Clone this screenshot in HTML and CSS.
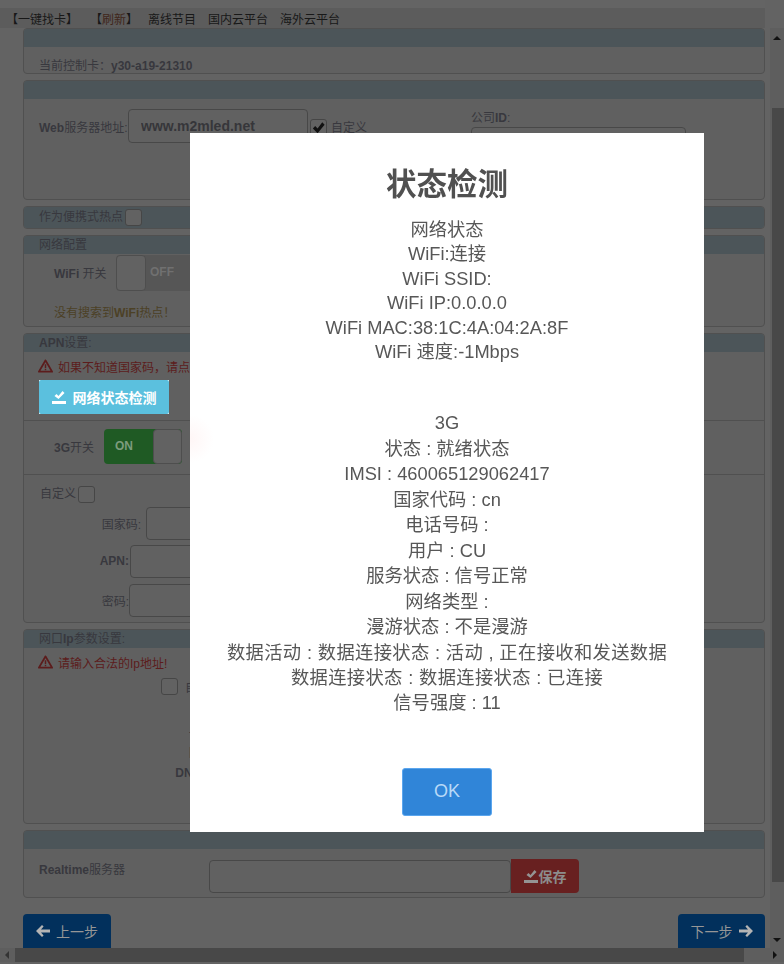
FILE: index.html
```html
<!DOCTYPE html>
<html lang="zh-CN">
<head>
    <meta charset="UTF-8">
    <title>状态检测</title>
    <link rel="stylesheet" href="styles.css">
</head>
<body>

    <div class="main">
        <div class="content">
            <div class="toolbar">
                <a class="tool-find">【一键找卡】</a>
                <a class="tool-refresh">【<em>刷新</em>】</a>
                <a class="tool-link">离线节目</a>
                <a class="tool-link">国内云平台</a>
                <a class="tool-link">海外云平台</a>
            </div>

            <div class="panel panel-card">
                <div class="panel-head"></div>
                <div class="card-name">当前控制卡：<b>y30-a19-21310</b></div>
            </div>

            <div class="panel panel-server">
                <div class="panel-head"></div>
                <div class="server-body">
                    <div class="server-left">
                        <label class="web-label"><b>Web</b>服务器地址:</label>
                        <input class="field field-web" type="text" value="www.m2mled.net">
                        <span class="check checked">
                            <svg viewBox="0 0 16 16" width="15" height="15"><path d="M2 9l2.5-2.5L7 9l5-6.5L14.5 5 7 14z" fill="#111"/></svg>
                        </span>
                        <label class="check-label">自定义</label>
                    </div>
                    <div class="server-right">
                        <label>公司<b>ID</b>:</label>
                        <input class="field field-company" type="text">
                    </div>
                </div>
            </div>

            <div class="panel panel-hotspot">
                <div class="panel-head">作为便携式热点<span class="check"></span></div>
            </div>

            <div class="panel panel-wifi">
                <div class="panel-head">网络配置</div>
                <div class="switch-row wifi-row">
                    <label><b>WiFi</b> 开关</label>
                    <div class="switch switch-off">
                        <span class="switch-handle"></span>
                        <span class="switch-text">OFF</span>
                    </div>
                </div>
                <div class="wifi-note">没有搜索到<b>WiFi</b>热点！</div>
            </div>

            <div class="panel panel-apn">
                <div class="panel-head"><b>APN</b>设置:</div>
                <div class="warn">
                    <svg viewBox="0 0 16 14" width="15" height="14"><path d="M8 1L1 13h14z" fill="none" stroke="#5c1c1c" stroke-width="2" stroke-linejoin="round"/><path d="M7.2 5h1.6v4.2H7.2zM7.2 10h1.6v1.5H7.2z" fill="#5c1c1c"/></svg>
                    如果不知道国家码，请点击下方按钮
                </div>
                <div class="check-wrap">
                    <button class="btn-check">
                        <svg viewBox="0 0 14 13" width="14" height="13"><path d="M0 10h14v3H0zM2.5 5l2-2 2 2L10.5 0l2 2-6 6z" fill="#fff"/></svg>
                        网络状态检测
                    </button>
                </div>
                <div class="switch-row row-3g">
                    <label><b>3G</b>开关</label>
                    <div class="switch switch-on">
                        <span class="switch-text">ON</span>
                        <span class="switch-handle"></span>
                    </div>
                </div>
                <div class="apn-form">
                    <div class="apn-custom">自定义<span class="check"></span></div>
                    <div class="apn-row apn-code"><label>国家码:</label><input class="field" type="text"></div>
                    <div class="apn-row apn-name"><label><b>APN:</b></label><input class="field" type="text"></div>
                    <div class="apn-row apn-pass"><label>密码:</label><input class="field" type="text"></div>
                </div>
            </div>

            <div class="panel panel-ip">
                <div class="panel-head">网口<b>Ip</b>参数设置:</div>
                <div class="warn">
                    <svg viewBox="0 0 16 14" width="15" height="14"><path d="M8 1L1 13h14z" fill="none" stroke="#5c1c1c" stroke-width="2" stroke-linejoin="round"/><path d="M7.2 5h1.6v4.2H7.2zM7.2 10h1.6v1.5H7.2z" fill="#5c1c1c"/></svg>
                    请输入合法的Ip地址!
                </div>
                <div class="ip-custom"><span class="check"></span><label>自动获取</label></div>
                <div class="ip-row ip-first">子网掩码:</div>
                <div class="ip-row">网关地址:</div>
                <div class="ip-row"><b>DNS</b>服务器:</div>
            </div>

            <div class="panel panel-realtime">
                <div class="panel-head"></div>
                <div class="realtime-body">
                    <label><b>Realtime</b>服务器</label>
                    <input class="field field-realtime" type="text">
                    <button class="btn-save">
                        <svg viewBox="0 0 14 13" width="14" height="13"><path d="M0 10h14v3H0zM2.5 5l2-2 2 2L10.5 0l2 2-6 6z" fill="#949494"/></svg>保存
                    </button>
                </div>
            </div>

            <div class="steps">
                <button class="btn-step">
                    <svg viewBox="0 0 14 12" width="14" height="12"><path d="M0 6l6-6 1.6 1.6L5 4.4h9v3.2H5l2.6 2.8L6 12z" fill="#b4b4b4"/></svg>
                    上一步
                </button>
                <button class="btn-step btn-next">
                    下一步
                    <svg viewBox="0 0 14 12" width="14" height="12"><path d="M14 6L8 0 6.4 1.6 9 4.4H0v3.2h9l-2.6 2.8L8 12z" fill="#b4b4b4"/></svg>
                </button>
            </div>
        </div>

        <div class="vscroll">
            <span class="arrow arrow-up"></span>
            <div class="vthumb"></div>
            <span class="arrow arrow-down"></span>
        </div>
    </div>

    <div class="hscroll">
        <span class="arrow arrow-left"></span>
        <div class="hthumb"></div>
        <span class="arrow arrow-right"></span>
    </div>

    <div class="modal">
        <h2>状态检测</h2>
        <div class="status status-net">
            <div>网络状态</div>
            <div>WiFi:连接</div>
            <div>WiFi SSID:</div>
            <div>WiFi IP:0.0.0.0</div>
            <div>WiFi MAC:38:1C:4A:04:2A:8F</div>
            <div>WiFi 速度:-1Mbps</div>
        </div>
        <div class="status status-3g">
            <div>3G</div>
            <div>状态 : 就绪状态</div>
            <div>IMSI : 460065129062417</div>
            <div>国家代码 : cn</div>
            <div>电话号码 :</div>
            <div>用户 : CU</div>
            <div>服务状态 : 信号正常</div>
            <div>网络类型 :</div>
            <div>漫游状态 : 不是漫游</div>
            <div class="long">数据活动 : 数据连接状态 : 活动 , 正在接收和发送数据</div>
            <div class="long">数据连接状态 : 数据连接状态 : 已连接</div>
            <div>信号强度 : 11</div>
        </div>
        <button class="btn-ok">OK</button>
    </div>

</body>
</html>
```

FILE: styles.css
```css
* {
    margin: 0;
    padding: 0;
    box-sizing: border-box;
}

/* the page sits dimmed behind the dialog, so its colours are the dimmed ones */
body {
    position: relative;
    width: 784px;
    height: 964px;
    overflow: hidden;
    font-family: "Liberation Sans", "Noto Sans CJK SC", sans-serif;
    font-size: 12px;
    background-color: #636363;
    color: #38383e;
}

label {
    font-weight: normal;
}

.main {
    display: flex;
    height: 948px;
}

.content {
    width: 770px;
    padding: 0 5px 0 23px;
}


.toolbar {
    display: flex;
    align-items: center;
    height: 28px;
    margin-left: -23px;
    padding: 8px 0 0 6px;
    background: linear-gradient(#646464 8px, #5c5c5c 8px);
    color: #181818;
}

.toolbar a {
    white-space: nowrap;
}

.tool-find {
    width: 84px;
}

.tool-refresh {
    width: 58px;
}

.tool-refresh em {
    font-style: normal;
    color: #40261a;
}

.tool-link {
    margin-right: 12px;
}


.panel {
    margin-bottom: 6px;
    border: 1px solid #505050;
    border-radius: 4px;
    background-color: #606060;
    overflow: hidden;
}

.panel-head {
    height: 18px;
    padding-left: 15px;
    line-height: 19px;
    background-color: #4c5559;
}

.panel-card {
    height: 46px;
}

.card-name {
    padding: 9px 0 0 15px;
}

.panel-server {
    height: 120px;
}

.server-body {
    display: flex;
    padding: 10px 0 0 15px;
}

.server-left {
    display: flex;
    align-items: center;
    align-self: flex-start;
    width: 432px;
}

.web-label {
    width: 89px;
}

.server-right label {
    display: block;
    margin: -1px 0 2px;
}

.field {
    height: 34px;
    border: 1px solid #484848;
    border-radius: 4px;
    background-color: #616161;
}

.field-web {
    width: 180px;
    padding-left: 12px;
    font: bold 14px "Liberation Sans", sans-serif;
    color: #36363a;
}

.field-company {
    display: block;
    width: 215px;
}

.check {
    display: inline-block;
    flex: none;
    width: 17px;
    height: 17px;
    margin-left: 2px;
    border: 1px solid #464646;
    border-radius: 3px;
    background-color: #626262;
    vertical-align: middle;
}

.checked {
    margin-top: 2px;
    line-height: 0;
}

.check-label {
    margin-left: 4px;
}

.panel-hotspot {
    height: 23px;
}

.panel-hotspot .panel-head {
    height: 23px;
    line-height: 21px;
}

.panel-wifi {
    height: 92px;
}

.switch-row {
    display: flex;
    align-items: center;
}

.wifi-row {
    height: 37px;
    padding-left: 30px;
}

.wifi-row label {
    width: 62px;
}

.switch {
    display: flex;
    height: 36px;
    width: 78px;
    border-radius: 4px;
    overflow: hidden;
    line-height: 34px;
    font-weight: bold;
}

.switch-handle {
    width: 30px;
    border: 1px solid #4e4e4e;
    border-radius: 4px;
    background-color: #626262;
}

.switch-off {
    background-color: #565656;
}

.switch-off .switch-text {
    flex: 1;
    padding-left: 4px;
    color: #707070;
}

.switch-on {
    background-color: #1f5a24;
}

.switch-on .switch-text {
    flex: 1;
    padding-left: 11px;
    color: #7c9c7e;
}

.wifi-note {
    padding: 12px 0 0 30px;
    color: #4c4126;
}

.panel-apn {
    height: 290px;
}

.warn {
    display: flex;
    align-items: center;
    gap: 5px;
    height: 14px;
    margin: 7px 0 0 14px;
    color: #5c1c1c;
    white-space: nowrap;
}

.check-wrap {
    width: 130px;
    height: 34px;
    margin: 7px 0 0 15px;
    background-color: #fff;
}

.btn-check {
    display: flex;
    align-items: center;
    justify-content: center;
    gap: 7px;
    width: 100%;
    height: 100%;
    border: none;
    border-radius: 2px;
    background-color: #5bc0de;
    color: #fff;
    font: bold 14px "Liberation Sans", "Noto Sans CJK SC", sans-serif;
}

.row-3g {
    height: 55px;
    margin-top: 6px;
    padding: 0 0 2px 30px;
    border-top: 1px solid #505050;
    border-bottom: 1px solid #505050;
}

.row-3g label {
    width: 50px;
}

.row-3g .switch {
    height: 35px;
}

.row-3g .switch-handle {
    width: 29px;
}

.apn-custom {
    padding: 9px 0 0 16px;
}

.apn-row {
    display: flex;
    align-items: center;
    height: 34px;
    width: 300px;
}

.apn-row label {
    flex: none;
    text-align: right;
}

.apn-code {
    margin-top: 3px;
}

.apn-code label {
    width: 117px;
    margin-right: 5px;
}

.apn-name {
    margin-top: 4px;
}

.apn-name label {
    width: 105px;
    margin-right: 1px;
}

.apn-pass {
    margin-top: 5px;
}

.apn-pass label {
    width: 105px;
}

.apn-row .field {
    flex: 1;
    height: 33px;
}

.panel-ip {
    height: 195px;
}

.ip-custom {
    display: flex;
    align-items: center;
    gap: 7px;
    height: 17px;
    margin: 9px 0 0 135px;
}

.ip-row {
    width: 216px;
    text-align: right;
    line-height: 20px;
}

.ip-first {
    margin-top: 28px;
}

.panel-realtime {
    height: 68px;
}

.realtime-body {
    display: flex;
    align-items: flex-start;
    height: 48px;
    padding: 11px 0 0 15px;
}

.realtime-body label {
    width: 170px;
}

.field-realtime {
    width: 302px;
    height: 33px;
}

.btn-save {
    display: flex;
    align-items: center;
    justify-content: center;
    gap: 1px;
    width: 68px;
    height: 34px;
    margin-top: -1px;
    border: none;
    border-radius: 0 4px 4px 0;
    background-color: #682020;
    color: #8c8c8c;
    font: bold 14px "Liberation Sans", "Noto Sans CJK SC", sans-serif;
}

.steps {
    display: flex;
    justify-content: space-between;
    margin-top: 16px;
}

.btn-step {
    display: flex;
    align-items: center;
    justify-content: center;
    gap: 6px;
    width: 88px;
    height: 34px;
    border: none;
    border-radius: 4px 4px 0 0;
    background-color: #02305c;
    color: #969696;
    font: normal 14px "Liberation Sans", "Noto Sans CJK SC", sans-serif;
}

.btn-next {
    width: 87px;
}


.vscroll {
    position: relative;
    flex: none;
    width: 14px;
    margin-top: 28px;
    padding-top: 80px;
    background-color: #5e5e5e;
}

.vthumb {
    width: 12px;
    height: 774px;
    margin-left: 2px;
    background-color: #484848;
}

.hscroll {
    position: relative;
    display: flex;
    height: 14px;
    padding-left: 15px;
    background-color: #5e5e5e;
}

.hthumb {
    width: 729px;
    background-color: #484848;
}

.arrow {
    position: absolute;
    width: 0;
    height: 0;
    border: 4px solid transparent;
}

.arrow-up {
    top: 4px;
    left: 3px;
    border-bottom-color: #111;
}

.arrow-down {
    bottom: 2px;
    left: 3px;
    border-top-color: #111;
}

.arrow-left {
    top: 3px;
    left: 1px;
    border-right-color: #333;
}

.arrow-right {
    top: 3px;
    right: 3px;
    border-left-color: #111;
}


.modal {
    position: absolute;
    top: 133px;
    left: 190px;
    display: flex;
    flex-direction: column;
    align-items: center;
    width: 514px;
    height: 699px;
    padding-top: 32px;
    background: radial-gradient(circle at 0 306px, #fff6f6, #fff 24px);
    text-align: center;
    color: #575757;
}

.modal h2 {
    height: 38px;
    margin-bottom: 15px;
    font-size: 30.5px;
    line-height: 38px;
    font-weight: bold;
    color: #505050;
    filter: blur(0.3px);
}

.status {
    width: 100%;
    font-size: 18.3px;
    filter: blur(0.3px);
}

.status-net {
    line-height: 24.4px;
}

.status-3g {
    margin-top: 46px;
    line-height: 25.45px;
}

.long {
    letter-spacing: 0.35px;
}

.btn-ok {
    width: 90px;
    height: 48px;
    margin-top: 52px;
    border: 1px solid #5ba6ee;
    border-radius: 3px;
    background-color: #3085d8;
    color: #b9d9f7;
    font: normal 18px "Liberation Sans", sans-serif;
}
```
